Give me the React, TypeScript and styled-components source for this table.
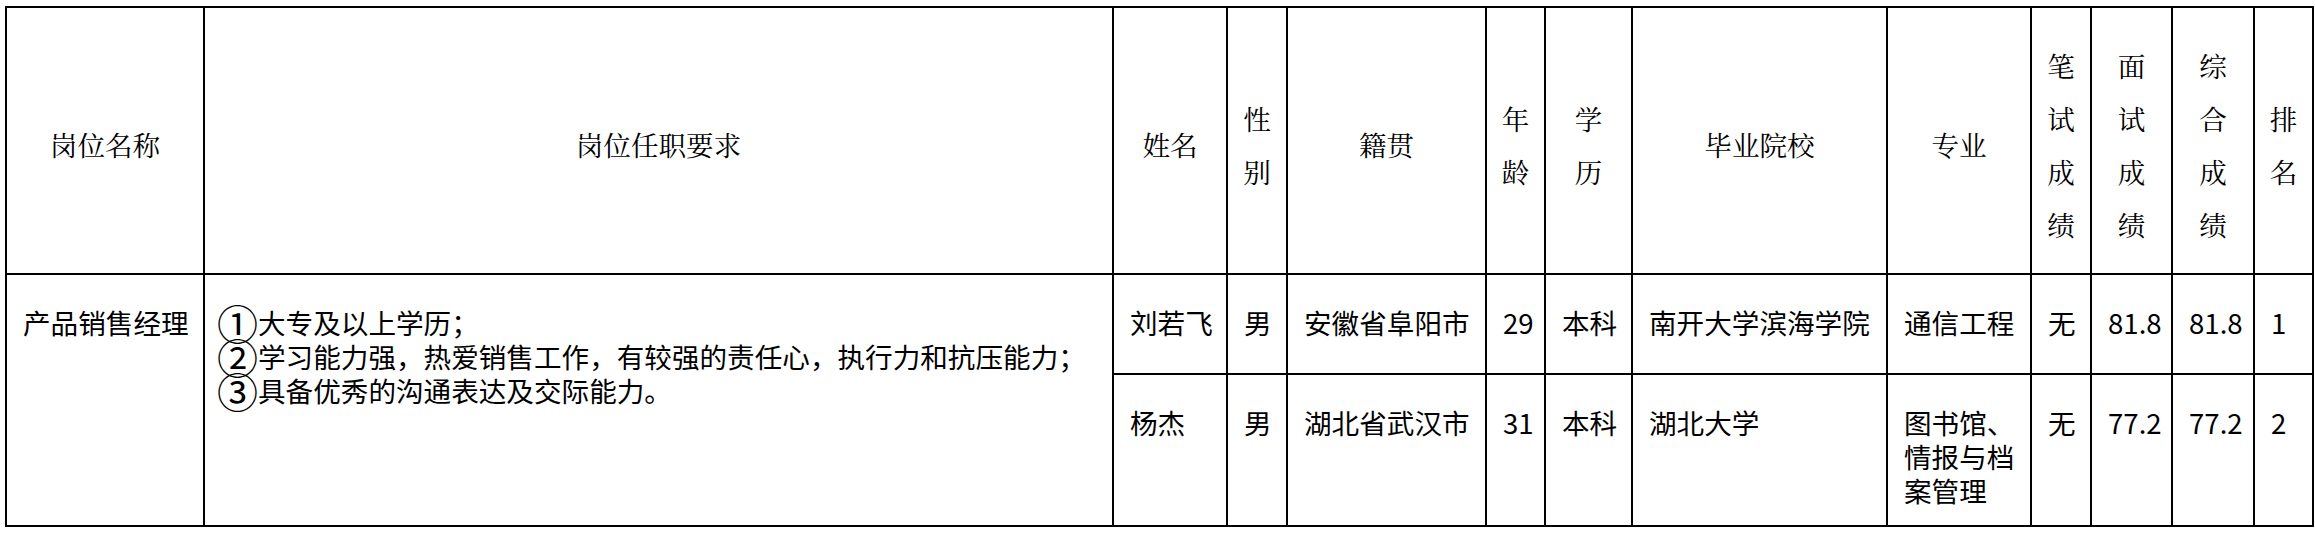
import React from "react";
import styled, { createGlobalStyle } from "styled-components";

const GlobalStyle = createGlobalStyle`
  html, body {
    margin: 0;
    padding: 0;
    background: #ffffff;
  }
`;

const Page = styled.div`
  padding: 6px 0 0 5px;
  background: #ffffff;
`;

const Table = styled.table`
  border-collapse: collapse;
  table-layout: fixed;
  width: 2309px;
  color: #000000;
`;

const HeadRow = styled.tr`
  height: 267px;
`;

const BodyRow = styled.tr<{ $h: number }>`
  height: ${(p) => p.$h}px;
`;

const HeadCell = styled.th`
  border: 2px solid #000000;
  padding: 8px 0 0 0;
  font-family: "Noto Serif CJK SC", "Noto Serif SC", "Source Han Serif SC", "AR PL UMing CN", "Noto Sans CJK SC", serif;
  font-weight: normal;
  font-size: 27.6px;
  line-height: 53px;
  text-align: center;
  vertical-align: middle;
`;

const Cell = styled.td`
  border: 2px solid #000000;
  padding: 30px 0 0 16px;
  font-family: "Noto Sans CJK SC", "Noto Sans", sans-serif;
  font-size: 27.6px;
  line-height: 34px;
  text-align: left;
  vertical-align: top;
`;

const Line = styled.div`
  white-space: nowrap;
`;

const CircledNum = styled.span`
  display: inline-flex;
  justify-content: center;
  width: 33px;
  height: 34px;
  margin-right: 4px;
  font-family: "Noto Sans CJK SC", sans-serif;
  font-size: 41px;
  line-height: 34px;
  vertical-align: top;
`;

const columns = [198, 909, 114, 60, 199, 59, 87, 255, 144, 60, 81, 82, 59];

const headers: string[][] = [
  ["岗位名称"],
  ["岗位任职要求"],
  ["姓名"],
  ["性", "别"],
  ["籍贯"],
  ["年", "龄"],
  ["学", "历"],
  ["毕业院校"],
  ["专业"],
  ["笔", "试", "成", "绩"],
  ["面", "试", "成", "绩"],
  ["综", "合", "成", "绩"],
  ["排", "名"],
];

const requirements: { mark: string; text: string }[] = [
  { mark: "①", text: "大专及以上学历；" },
  { mark: "②", text: "学习能力强，热爱销售工作，有较强的责任心，执行力和抗压能力；" },
  { mark: "③", text: "具备优秀的沟通表达及交际能力。" },
];

type Person = {
  name: string;
  sex: string;
  origin: string;
  age: string;
  degree: string;
  school: string;
  major: string[];
  written: string;
  interview: string;
  total: string;
  rank: string;
};

const people: Person[] = [
  {
    name: "刘若飞",
    sex: "男",
    origin: "安徽省阜阳市",
    age: "29",
    degree: "本科",
    school: "南开大学滨海学院",
    major: ["通信工程"],
    written: "无",
    interview: "81.8",
    total: "81.8",
    rank: "1",
  },
  {
    name: "杨杰",
    sex: "男",
    origin: "湖北省武汉市",
    age: "31",
    degree: "本科",
    school: "湖北大学",
    major: ["图书馆、", "情报与档", "案管理"],
    written: "无",
    interview: "77.2",
    total: "77.2",
    rank: "2",
  },
];

const rowHeights = [100, 152];

function PersonCells({ p }: { p: Person }) {
  return (
    <>
      <Cell>{p.name}</Cell>
      <Cell>{p.sex}</Cell>
      <Cell>{p.origin}</Cell>
      <Cell>{p.age}</Cell>
      <Cell>{p.degree}</Cell>
      <Cell>{p.school}</Cell>
      <Cell>
        {p.major.map((m, i) => (
          <Line key={i}>{m}</Line>
        ))}
      </Cell>
      <Cell>{p.written}</Cell>
      <Cell>{p.interview}</Cell>
      <Cell>{p.total}</Cell>
      <Cell>{p.rank}</Cell>
    </>
  );
}

export default function App() {
  return (
    <>
      <GlobalStyle />
      <Page>
        <Table>
          <colgroup>
            {columns.map((w, i) => (
              <col key={i} style={{ width: w }} />
            ))}
          </colgroup>
          <thead>
            <HeadRow>
              {headers.map((lines, i) => (
                <HeadCell key={i}>
                  {lines.map((l, j) => (
                    <Line key={j}>{l}</Line>
                  ))}
                </HeadCell>
              ))}
            </HeadRow>
          </thead>
          <tbody>
            {people.map((p, i) => (
              <BodyRow key={i} $h={rowHeights[i]}>
                {i === 0 && (
                  <>
                    <Cell rowSpan={2}>产品销售经理</Cell>
                    <Cell rowSpan={2}>
                      {requirements.map((r, j) => (
                        <Line key={j}>
                          <CircledNum>{r.mark}</CircledNum>
                          {r.text}
                        </Line>
                      ))}
                    </Cell>
                  </>
                )}
                <PersonCells p={p} />
              </BodyRow>
            ))}
          </tbody>
        </Table>
      </Page>
    </>
  );
}
